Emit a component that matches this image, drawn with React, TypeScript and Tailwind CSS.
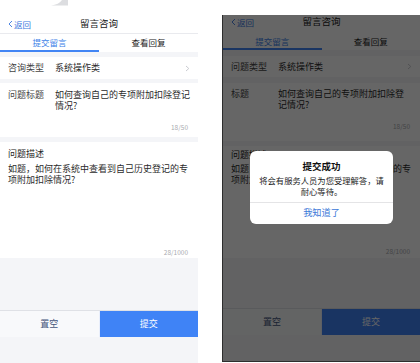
import React from "react";

const font = "font-['Noto_Sans_CJK_SC','Noto_Sans',sans-serif]";

// two screenshots of the same page: the live one and the iOS one with the alert up
const variants = {
  live: {
    nav: "h-[19px] border-b border-[#e9eaee]",
    tabs: "h-[18px] items-center",
    tabText: "leading-[11px]",
    strip1: "h-[5px]",
    row1: "h-[22px]",
    strip2: "h-[4px]",
    row2: "h-[54px] pt-[6px] pb-[6px]",
    strip3: "h-[5px]",
    desc: "h-[116px] pt-[6px] pb-[2px]",
    descGap: "mt-[4px]",
    typeLabel: "咨询类型",
    titleLabel: "问题标题",
  },
  ios: {
    nav: "h-[14px]",
    tabs: "h-[21px] items-end",
    tabText: "leading-[11px] pb-[1px]",
    strip1: "h-[6px]",
    row1: "h-[21px]",
    strip2: "h-[6px]",
    row2: "h-[58px] pt-[5px] pb-[11px]",
    strip3: "h-[5px]",
    desc: "h-[112px] pt-[3px] pb-[3px]",
    descGap: "mt-[3px]",
    typeLabel: "问题类型",
    titleLabel: "标题",
  },
} as const;

type Variant = keyof typeof variants;

const Chevron = () => (
  <svg width="5" height="7" viewBox="0 0 5 7" className="shrink-0">
    <polyline points="1,1 3.8,3.5 1,6" fill="none" stroke="#c4c6cc" strokeWidth="0.9" />
  </svg>
);

const ConsultForm = ({ v }: { v: Variant }) => {
  const s = variants[v];
  return (
    <div className="flex flex-col flex-1 bg-[#f4f5f8] text-[#2b2b2b]">
      <div className={`${s.nav} bg-white grid grid-cols-[1fr_auto_1fr] items-center px-2`}>
        <div className="flex items-center text-[#3a78e0] text-[8.5px] leading-none">
          <svg width="5" height="8" viewBox="0 0 5 8" className="mr-[1px]">
            <polyline points="4,1 1,4 4,7" fill="none" stroke="#3a78e0" strokeWidth="0.9" />
          </svg>
          返回
        </div>
        <div className="text-[9.5px] leading-none text-[#222]">留言咨询</div>
        <div />
      </div>
      <div className={`${s.tabs} bg-white flex text-[8.5px]`}>
        <div className={`flex-1 h-full flex justify-center ${v === "live" ? "items-center" : "items-end"} border-b-2 border-[#4285f4] text-[#3d7fe8]`}>
          <span className={s.tabText}>提交留言</span>
        </div>
        <div className={`flex-1 h-full flex justify-center ${v === "live" ? "items-center" : "items-end"} border-b-2 border-transparent text-[#222]`}>
          <span className={s.tabText}>查看回复</span>
        </div>
      </div>
      <div className={s.strip1} />
      <div className={`${s.row1} bg-white flex items-center px-2 text-[9px]`}>
        <span className="w-[47px] shrink-0 text-[#444]">{s.typeLabel}</span>
        <span className="flex-1">系统操作类</span>
        <Chevron />
      </div>
      <div className={s.strip2} />
      <div className={`${s.row2} bg-white px-2 flex flex-col justify-between text-[9px]`}>
        <div className="flex leading-[11px]">
          <span className="w-[47px] shrink-0 text-[#444]">{s.titleLabel}</span>
          <span className="flex-1">如何查询自己的专项附加扣除登记情况?</span>
        </div>
        <div className="text-right text-[6.5px] leading-[8px] text-[#a9abb0] pr-[2px]">18/50</div>
      </div>
      <div className={s.strip3} />
      <div className={`${s.desc} bg-white px-2 flex flex-col text-[9px]`}>
        <div className="leading-[11px] text-[#222]">问题描述</div>
        <div className={`${s.descGap} leading-[11px] whitespace-nowrap`}>
          <div>如题，如何在系统中查看到自己历史登记的专</div>
          <div>项附加扣除情况?</div>
        </div>
        <div className="mt-auto text-right text-[6.5px] leading-[8px] text-[#a9abb0] pr-[2px]">28/1000</div>
      </div>
      <div className="flex-1" />
      <div className="h-[27px] flex border-t border-[#dfe1e6] text-[9px]">
        <button className="flex-1 bg-[#f8f9fb] text-[#44557a]">置空</button>
        <button className="flex-1 bg-[#3f83f6] text-white border-l border-[#e8eefb]">提交</button>
      </div>
      <div className="h-[26px]" />
    </div>
  );
};

export default function App() {
  return (
    <div className={`${font} w-[420px] h-[363px] bg-white flex overflow-hidden`}>
      <div className="w-[198px] h-[363px] flex flex-col">
        <div className="h-[15px] bg-white relative">
          <svg width="20" height="6" viewBox="0 0 20 6" className="absolute left-[50px] top-0">
            <path d="M1 5.5 Q9 4.5 12 0 L18 0 L18 5.5 Z" fill="#dcdde0" />
          </svg>
        </div>
        <ConsultForm v="live" />
      </div>
      <div className="w-[24px]" />
      <div className="w-[198px] h-[363px] flex flex-col">
        <div className="h-[15px]" />
        <div className="relative h-[347px] flex flex-col border-l border-b border-[#2e2e2e]">
          <ConsultForm v="ios" />
          <div className="absolute inset-0 bg-black/60 flex items-center justify-center">
            <div className="w-[143px] h-[73px] bg-white rounded-[6px] flex flex-col items-center pt-[9px] -mt-[2px]">
              <div className="text-[9.5px] leading-[13px] font-bold text-[#111]">提交成功</div>
              <div className="mt-[2px] text-center text-[8.3px] leading-[11px] text-[#222] whitespace-nowrap">
                <div>将会有服务人员为您受理解答，请</div>
                <div>耐心等待。</div>
              </div>
              <div className="mt-auto w-full border-t border-[#e4e4e6] h-[22px] flex items-center justify-center text-[9.2px] text-[#3b78d8]">
                我知道了
              </div>
            </div>
          </div>
        </div>
        <div className="flex-1" />
      </div>
    </div>
  );
}
